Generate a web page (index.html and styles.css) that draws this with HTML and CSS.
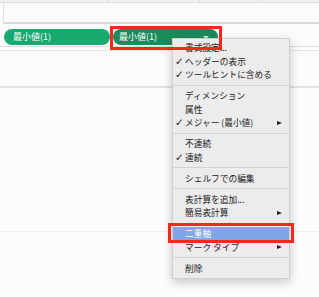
FILE: index.html
```
<!DOCTYPE html>
<html lang="ja">
<head>
    <meta charset="UTF-8">
    <title>最小値 メニュー</title>
    <link rel="stylesheet" href="styles.css">
</head>
<body>
    <div class="view">
        <!-- 一番上の細いヘッダー -->
        <div class="top-strip">
            <span class="cell cell-a"></span>
            <span class="cell cell-b"></span>
            <span class="cell cell-c"></span>
            <span class="cell cell-d"></span>
        </div>
        <div class="row-blank"></div>

        <!-- 行シェルフ -->
        <div class="shelf">
            <div class="pill">最小値(1)</div>
            <div class="pill pill-active">最小値(1)<span class="pill-arrow"></span></div>
        </div>
        <div class="shelf-line"></div>

        <div class="pane pane-top"></div>
        <div class="pane pane-mid"></div>

        <!-- コンテキストメニュー -->
        <div class="menu">
            <div class="menu-item">書式設定...</div>
            <div class="menu-item checked">ヘッダーの表示</div>
            <div class="menu-item checked">ツールヒントに含める</div>
            <div class="menu-sep"></div>
            <div class="menu-item">ディメンション</div>
            <div class="menu-item">属性</div>
            <div class="menu-item checked sub">メジャー (最小値)</div>
            <div class="menu-sep"></div>
            <div class="menu-item">不連続</div>
            <div class="menu-item checked">連続</div>
            <div class="menu-sep"></div>
            <div class="menu-item">シェルフでの編集</div>
            <div class="menu-sep"></div>
            <div class="menu-item">表計算を追加...</div>
            <div class="menu-item sub">簡易表計算</div>
            <div class="menu-sep"></div>
            <div class="menu-item selected">二重軸</div>
            <div class="menu-item sub">マーク タイプ</div>
            <div class="menu-sep"></div>
            <div class="menu-item">削除</div>
        </div>

        <!-- 赤い強調枠 -->
        <div class="mark mark-pill"></div>
        <div class="mark mark-item"></div>
    </div>
</body>
</html>
```

FILE: styles.css
```
* {
    margin: 0;
    padding: 0;
    box-sizing: border-box;
}

body {
    font-family: "Noto Sans CJK JP", "Noto Sans", sans-serif;
    background-color: #fcfcfc;
}

.view {
    position: relative;
    width: 319px;
    height: 297px;
    overflow: hidden;
}

/* 一番上の細い帯 */
.top-strip {
    display: flex;
    height: 3px;
    background-color: #efefef;
    border-bottom: 1px solid #dcdcdc;
}

.cell {
    border-right: 1px solid #d8d8d8;
}

.cell-a { width: 108px; }
.cell-b { width: 92px; }
.cell-c { width: 62px; }
.cell-d { flex: 1; border-right: none; }

.row-blank {
    height: 21px;
    margin-left: 3px;
    border-left: 1px solid #e0e0e0;
    border-bottom: 2px solid #dadada;
    background-color: #fbfbfb;
}

/* 行シェルフ */
.shelf {
    display: flex;
    gap: 3px;
    height: 23px;
    padding: 5px 0 0 4px;
    border-bottom: 1px solid #dedede;
}

.pill {
    width: 106px;
    height: 16px;
    padding-left: 9px;
    border-radius: 8px;
    background-color: #17a970;
    color: #fff;
    font-size: 9px;
    line-height: 16px;
}

.pill-active {
    position: relative;
    width: 105px;
    padding-left: 6px;
    border-radius: 8px 8px 2px 8px;
    background-color: #1b8b5c;
}

.pill-arrow {
    position: absolute;
    top: 7px;
    right: 9px;
    border-left: 3.5px solid transparent;
    border-right: 3.5px solid transparent;
    border-top: 3.5px solid #d8e8df;
}

.shelf-line {
    height: 4px;
    border-bottom: 1px solid #e4e4e4;
}

.pane-top {
    height: 37px;
    border-bottom: 2px solid #e2e2e2;
}

.pane-mid {
    height: 144px;
    border-bottom: 1px solid #efefef;
}

/* コンテキストメニュー */
.menu {
    position: absolute;
    top: 38px;
    left: 172px;
    width: 118px;
    padding: 2px 0 2.5px;
    background-color: #ececec;
    border: 1px solid #cfcfcf;
    box-shadow: 0 3px 10px rgba(0, 0, 0, 0.22);
    color: #222;
    font-size: 8.7px;
}

.menu-item {
    position: relative;
    height: 13.5px;
    line-height: 13.5px;
    padding-left: 12px;
    white-space: nowrap;
}

.menu-item.checked::before {
    content: "✓";
    position: absolute;
    left: 2px;
    font-family: "DejaVu Sans", sans-serif;
    font-size: 10.5px;
}

.menu-item.sub::after {
    content: "";
    position: absolute;
    top: 4.5px;
    right: 7px;
    border-top: 2.5px solid transparent;
    border-bottom: 2.5px solid transparent;
    border-left: 5px solid #222;
}

.menu-item.selected {
    background-color: #7ea6e8;
    color: #fff;
}

.menu-sep {
    height: 1px;
    margin: 3.25px 0;
    background-color: #d2d2d2;
}

/* 赤い強調枠 */
.mark {
    position: absolute;
    border: 3px solid #f5291b;
}

.mark-pill {
    top: 26px;
    left: 110px;
    width: 112px;
    height: 24px;
}

.mark-item {
    top: 223px;
    left: 168px;
    width: 126px;
    height: 20px;
}
```
